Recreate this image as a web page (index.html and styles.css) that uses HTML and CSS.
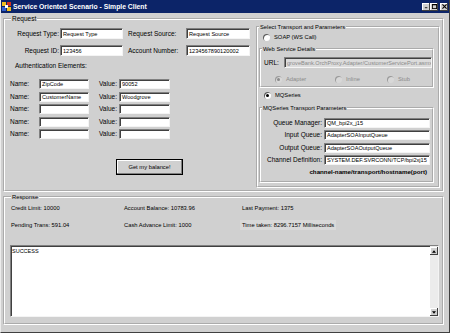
FILE: index.html
```html
<!DOCTYPE html>
<html lang="en">
<head>
    <meta charset="UTF-8">
    <title>Service Oriented Scenario - Simple Client</title>
    <link rel="stylesheet" href="styles.css">
</head>
<body>
<div class="window">
    <!-- title bar -->
    <div class="titlebar">
        <svg class="app-icon" viewBox="0 0 9 9">
            <rect x="0" y="0" width="4" height="4" fill="#f0c020"/>
            <rect x="5" y="0" width="4" height="4" fill="#d03020"/>
            <rect x="0" y="5" width="4" height="4" fill="#3060d0"/>
            <rect x="5" y="5" width="4" height="4" fill="#f0c020"/>
            <rect x="3" y="3" width="3" height="3" fill="#ffffff"/>
        </svg>
        <span class="title">Service Oriented Scenario - Simple Client</span>
        <div class="caption-buttons">
            <span class="cap-btn">
                <svg viewBox="0 0 6 6"><rect x="1" y="4" width="3" height="1" fill="#000"/></svg>
            </span>
            <span class="cap-btn">
                <svg viewBox="0 0 6 6"><rect x="0.5" y="0.5" width="5" height="5" fill="none" stroke="#000"/><rect x="0" y="0" width="6" height="1.5" fill="#000"/></svg>
            </span>
            <span class="cap-btn close">
                <svg viewBox="0 0 6 6"><path d="M0.5 0.5 L5.5 5.5 M5.5 0.5 L0.5 5.5" stroke="#000" stroke-width="1.3"/></svg>
            </span>
        </div>
    </div>

    <div class="client">
        <!-- request -->
        <fieldset class="group request">
            <legend>Request</legend>
            <div class="req-left">
                <div class="field-row">
                    <span class="lbl lbl-main">Request Type:</span>
                    <div class="input in-main">Request Type</div>
                    <span class="lbl lbl-side">Request Source:</span>
                    <div class="input in-side">Request Source</div>
                </div>
                <div class="field-row">
                    <span class="lbl lbl-main">Request ID:</span>
                    <div class="input in-main">123456</div>
                    <span class="lbl lbl-side">Account Number:</span>
                    <div class="input in-side">1234567890120002</div>
                </div>

                <div class="auth-title">Authentication Elements:</div>
                <div class="auth-list">
                    <div class="auth-row">
                        <span class="lbl lbl-name">Name:</span>
                        <div class="input in-name">ZipCode</div>
                        <span class="lbl lbl-value">Value:</span>
                        <div class="input in-value">90052</div>
                    </div>
                    <div class="auth-row">
                        <span class="lbl lbl-name">Name:</span>
                        <div class="input in-name">CustomerName</div>
                        <span class="lbl lbl-value">Value:</span>
                        <div class="input in-value">Woodgrove</div>
                    </div>
                    <div class="auth-row">
                        <span class="lbl lbl-name">Name:</span>
                        <div class="input in-name"></div>
                        <span class="lbl lbl-value">Value:</span>
                        <div class="input in-value"></div>
                    </div>
                    <div class="auth-row">
                        <span class="lbl lbl-name">Name:</span>
                        <div class="input in-name"></div>
                        <span class="lbl lbl-value">Value:</span>
                        <div class="input in-value"></div>
                    </div>
                    <div class="auth-row">
                        <span class="lbl lbl-name">Name:</span>
                        <div class="input in-name"></div>
                        <span class="lbl lbl-value">Value:</span>
                        <div class="input in-value"></div>
                    </div>
                </div>

                <button class="btn">Get my balance!</button>
            </div>

            <!-- transport -->
            <fieldset class="group transport">
                <legend>Select Transport and Parameters</legend>
                <div class="option soap"><span class="radio"></span>SOAP (WS Call)</div>

                <fieldset class="group ws">
                    <legend>Web Service Details</legend>
                    <div class="url-row">
                        <span class="lbl lbl-url">URL:</span>
                        <div class="input in-url disabled">groveBank.OrchProxy.Adapter/CustomerServicePort.asmx</div>
                    </div>
                    <div class="ws-modes">
                        <div class="option disabled mode-adapter"><span class="radio checked"></span>Adapter</div>
                        <div class="option disabled mode-inline"><span class="radio"></span>Inline</div>
                        <div class="option disabled"><span class="radio"></span>Stub</div>
                    </div>
                </fieldset>

                <div class="option mq"><span class="radio checked"></span>MQSeries</div>

                <fieldset class="group mqp">
                    <legend>MQSeries Transport Parameters</legend>
                    <div class="mq-rows">
                        <div class="mq-row"><span class="lbl mq-lbl">Queue Manager:</span><div class="input in-mq">QM_bpi2x_j15</div></div>
                        <div class="mq-row"><span class="lbl mq-lbl">Input Queue:</span><div class="input in-mq">AdapterSOAInputQueue</div></div>
                        <div class="mq-row"><span class="lbl mq-lbl">Output Queue:</span><div class="input in-mq">AdapterSOAOutputQueue</div></div>
                        <div class="mq-row"><span class="lbl mq-lbl">Channel Definition:</span><div class="input in-mq">SYSTEM.DEF.SVRCONN/TCP/bpi2xj15</div></div>
                    </div>
                    <div class="mq-hint">channel-name/transport/hostname(port)</div>
                </fieldset>
            </fieldset>
        </fieldset>

        <!-- response -->
        <fieldset class="group response">
            <legend>Response</legend>
            <div class="resp-row first">
                <span class="c1">Credit Limit: 10000</span>
                <span class="c2">Account Balance: 10783.96</span>
                <span>Last Payment: 1375</span>
            </div>
            <div class="resp-row">
                <span class="c1">Pending Trans: 591.04</span>
                <span class="c2">Cash Advance Limit: 1000</span>
                <span class="time">Time taken: 8296.7157 Milliseconds</span>
            </div>
            <div class="output">
                <div class="output-text">SUCCESS</div>
                <div class="scrollbar">
                    <span class="sb-btn">
                        <svg viewBox="0 0 5 3"><path d="M2.5 0 L5 3 L0 3 Z" fill="#000"/></svg>
                    </span>
                    <span class="sb-btn">
                        <svg viewBox="0 0 5 3"><path d="M0 0 L5 0 L2.5 3 Z" fill="#000"/></svg>
                    </span>
                </div>
            </div>
        </fieldset>
    </div>
</div>
</body>
</html>
```

FILE: styles.css
```css
/* page */
body {
    margin: 0;
    background: #d0d0d0;
    font-family: "Liberation Sans", Arial, sans-serif;
    font-size: 6.5px;
    line-height: 8px;
    color: #000;
}

* {
    box-sizing: border-box;
}

/* window frame */
.window {
    width: 450px;
    height: 333px;
    border-left: 1px solid #ececec;
    border-right: 1px solid #404040;
    border-bottom: 1px solid #404040;
    background: #d0d0d0;
    overflow: hidden;
}

/* title bar */
.titlebar {
    height: 13px;
    display: flex;
    align-items: center;
    padding: 0 1px;
    background: #0c2468;
    color: #fff;
}

.app-icon {
    width: 9px;
    height: 9px;
    margin-right: 2px;
}

.title {
    flex: 1;
    font-size: 6.8px;
    font-weight: bold;
}

.caption-buttons {
    display: flex;
}

.cap-btn {
    width: 8px;
    height: 8px;
    display: flex;
    align-items: center;
    justify-content: center;
    background: #d0d0d0;
    box-shadow: inset -1px -1px #404040, inset 1px 1px #fff;
}

.cap-btn svg {
    width: 5px;
    height: 5px;
}

.cap-btn.close {
    margin-left: 2px;
}

/* client area */
.client {
    padding: 2px 5px 0 2px;
}

/* group boxes */
fieldset.group {
    margin: 0;
    padding: 0;
    min-width: 0;
    border: 2px groove #ffffff;
}

fieldset.group > legend {
    padding: 0 1px;
    margin-left: 1px;
    font-size: 5.8px;
    line-height: 8px;
}

fieldset.request {
    height: 177px;
    display: flex;
    padding: 0 2px 0 5px;
}

fieldset.request > legend {
    font-size: 6.5px;
}

/* request fields */
.req-left {
    width: 246px;
    padding-top: 5px;
}

.field-row {
    display: flex;
    align-items: center;
    height: 11px;
}

.field-row + .field-row {
    margin-top: 6px;
}

.lbl {
    white-space: nowrap;
}

.lbl-main {
    width: 50px;
    padding-right: 1px;
    text-align: right;
}

.lbl-side {
    width: 58px;
    margin-left: 5px;
}

.input {
    height: 100%;
    display: flex;
    align-items: center;
    padding-left: 2px;
    font-size: 5.6px;
    background: #fff;
    border-top: 1px solid #808080;
    border-left: 1px solid #808080;
    border-right: 1px solid #f4f4f4;
    border-bottom: 1px solid #f4f4f4;
    box-shadow: inset 1px 1px #404040;
    white-space: nowrap;
    overflow: hidden;
    flex-shrink: 0;
}

.input.disabled {
    background: #dcdcdc;
    color: #8a8a8a;
}

.in-main {
    width: 63px;
}

.in-side {
    width: 64px;
}

.auth-title {
    margin-top: 6px;
    padding-left: 5px;
}

.auth-list {
    margin-top: 9px;
    display: flex;
    flex-direction: column;
    gap: 2.5px;
}

.auth-row {
    display: flex;
    align-items: center;
    height: 10px;
}

.lbl-name {
    width: 29px;
}

.in-name {
    width: 50px;
}

.lbl-value {
    width: 20px;
    margin-left: 10px;
}

.in-value {
    width: 51px;
}

/* button */
.btn {
    display: block;
    width: 67px;
    height: 16px;
    margin: 20px 0 0 106px;
    padding: 0;
    font-family: inherit;
    font-size: 5.8px;
    color: #000;
    background: #d0d0d0;
    border: 1px solid #000;
    box-shadow: inset -1px -1px #808080, inset 1px 1px #fff;
}

/* transport */
fieldset.transport {
    width: 184px;
    height: 165px;
    flex-shrink: 0;
}

.option {
    display: flex;
    align-items: center;
    height: 8px;
    font-size: 5.8px;
    white-space: nowrap;
}

.option.disabled {
    color: #8a8a8a;
}

.radio {
    width: 7px;
    height: 7px;
    margin-right: 4px;
    display: flex;
    align-items: center;
    justify-content: center;
    border-radius: 50%;
    background: #fff;
    box-shadow: inset 1px 1px #5a5a5a;
}

.radio.checked::after {
    content: "";
    width: 3px;
    height: 3px;
    border-radius: 50%;
    background: #000;
}

.disabled .radio {
    background: #d8d8d8;
    box-shadow: inset 1px 1px #9a9a9a;
}

.disabled .radio.checked::after {
    background: #8a8a8a;
}

.soap {
    margin: 2px 0 0 5px;
}

fieldset.ws {
    width: 175px;
    height: 43px;
    margin: 4px 0 0 1px;
}

.url-row {
    display: flex;
    align-items: center;
    height: 11px;
    margin-top: 4px;
    padding-left: 3px;
}

.lbl-url {
    width: 20px;
}

.in-url {
    width: 148px;
}

.ws-modes {
    display: flex;
    margin-top: 7px;
    padding-left: 14px;
}

.mode-adapter {
    width: 60px;
}

.mode-inline {
    width: 52px;
}

.mq {
    margin: 3px 0 0 6px;
}

fieldset.mqp {
    width: 175px;
    height: 79px;
    margin: 5px 0 0 1px;
}

.mq-rows {
    margin-top: 6px;
    display: flex;
    flex-direction: column;
    gap: 2.4px;
}

.mq-row {
    display: flex;
    align-items: center;
    height: 10px;
}

.mq-lbl {
    width: 63px;
    padding-right: 2px;
    text-align: right;
}

.in-mq {
    width: 106px;
}

.mq-hint {
    margin-top: 3px;
    padding-right: 5px;
    text-align: right;
    font-size: 6.2px;
    font-weight: bold;
    white-space: nowrap;
}

/* response */
fieldset.response {
    height: 132px;
    margin-top: 1px;
}

fieldset.response > legend {
    margin-left: 6px;
}

.resp-row {
    display: flex;
    align-items: center;
    height: 8px;
    margin-top: 9px;
    padding-left: 6px;
    font-size: 5.8px;
    white-space: nowrap;
}

.resp-row.first {
    margin-top: 3px;
}

.c1 {
    width: 113px;
}

.c2 {
    width: 118px;
}

.time {
    margin-left: -2px;
    padding: 0 2px;
    background: #d9d9d9;
    line-height: 10px;
}

.output {
    display: flex;
    width: 429px;
    height: 72px;
    margin: 16px 0 0 5px;
    background: #fff;
    border-top: 1px solid #808080;
    border-left: 1px solid #808080;
    border-right: 1px solid #f4f4f4;
    border-bottom: 1px solid #f4f4f4;
    box-shadow: inset 1px 1px #404040;
}

.output-text {
    flex: 1;
    padding: 1px 0 0 1px;
    font-size: 5.5px;
}

.scrollbar {
    width: 8px;
    display: flex;
    flex-direction: column;
    justify-content: space-between;
    padding-top: 1px;
    background: #ececec;
}

.sb-btn {
    height: 8px;
    display: flex;
    align-items: center;
    justify-content: center;
    background: #d0d0d0;
    box-shadow: inset -1px -1px #404040, inset 1px 1px #fff;
}

.sb-btn svg {
    width: 4px;
    height: 3px;
}
```
